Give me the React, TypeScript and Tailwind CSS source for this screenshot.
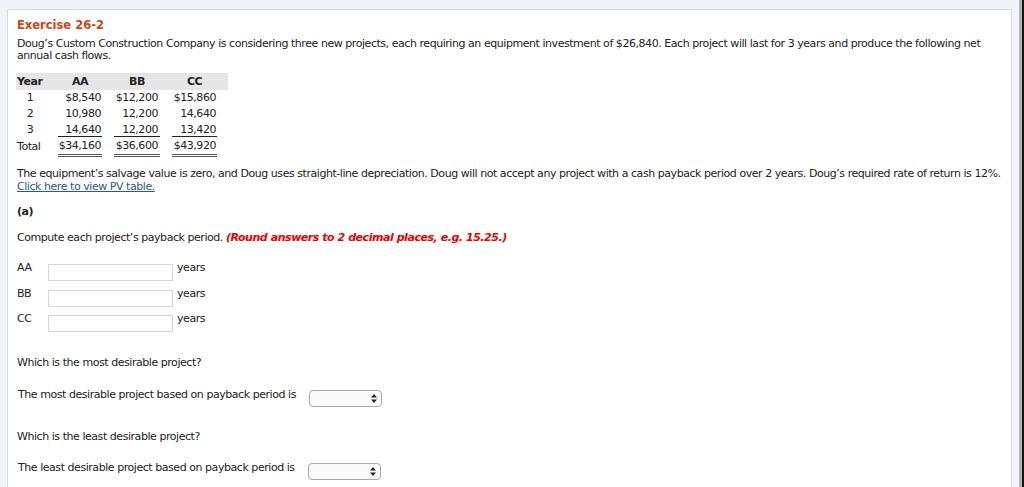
import React from "react";

const rows = [
  ["1", "$8,540", "$12,200", "$15,860"],
  ["2", "10,980", "12,200", "14,640"],
  ["3", "14,640", "12,200", "13,420"],
];

function AnswerInput({ label, h }: { label: string; h: string }) {
  return (
    <div className={"flex items-start " + h}>
      <span className="w-[31px]">{label}</span>
      <div className="w-[125px] h-[17px] mt-[2px] border border-[#d6d6d6] bg-white" />
      <span className="ml-[4px]">years</span>
    </div>
  );
}

function Dropdown() {
  return (
    <div className="w-[73px] h-[17px] mt-[1px] rounded-[4px] border border-[#a9a9a9] bg-[#fafafa] flex items-center justify-end pr-[4px]">
      <svg width="6" height="9" viewBox="0 0 6 9">
        <path d="M3 0 L6 3.5 L0 3.5 Z" fill="#222" />
        <path d="M3 9 L6 5.5 L0 5.5 Z" fill="#222" />
      </svg>
    </div>
  );
}

export default function App() {
  return (
    <div
      className="w-[1024px] h-[487px] overflow-hidden bg-[#f0f3f8] flex text-[11px] text-[#222] leading-[12px] tracking-[-0.45px]"
      style={{ fontFamily: '"DejaVu Sans", Verdana, sans-serif' }}
    >
      <div className="flex-1 pl-[7px] pt-[9px] pr-[7px]">
        <div className="h-[490px] bg-white border border-[#d5dae1] pl-[9px] pr-[6px] pt-[9px]">
          <div className="text-[#cc4512] font-bold tracking-[0px] text-[11.5px]">Exercise 26-2</div>
          <p className="mt-[7px]">
            Doug’s Custom Construction Company is considering three new projects, each requiring an equipment investment of $26,840. Each project will last for 3 years and produce the following net annual cash flows.
          </p>

          <table className="mt-[11px] ml-[-1px] border-collapse">
            <thead>
              <tr className="bg-[#e6e6e6] h-[17px] font-bold">
                <th className="w-[32px] text-left pl-[1px]">Year</th>
                <th className="w-[56px] pl-[10px] pr-[2px]">
                  <span className="block w-[44px] text-center">AA</span>
                </th>
                <th className="w-[56px] pl-[10px]">
                  <span className="block w-[46px] text-center">BB</span>
                </th>
                <th className="w-[68px] pl-[12px] pr-[11px]">
                  <span className="block w-[45px] text-center">CC</span>
                </th>
              </tr>
            </thead>
            <tbody>
              {rows.map((r, i) => (
                <tr key={r[0]} className="h-[16px]">
                  <td className="text-center pr-[4px]">{r[0]}</td>
                  <td className="pl-[10px] pr-[2px]">
                    <span className={"block w-[44px] text-right pr-[1px] " + (i === 2 ? "border-b border-[#222]" : "")}>{r[1]}</span>
                  </td>
                  <td className="pl-[10px]">
                    <span className={"block w-[46px] text-right pr-[2px] " + (i === 2 ? "border-b border-[#222]" : "")}>{r[2]}</span>
                  </td>
                  <td className="pl-[12px] pr-[11px]">
                    <span className={"block w-[45px] text-right pr-[1px] " + (i === 2 ? "border-b border-[#222]" : "")}>{r[3]}</span>
                  </td>
                </tr>
              ))}
              <tr className="h-[20px]">
                <td className="text-left pl-[1px] pb-[2px]">Total</td>
                <td className="pl-[10px] pr-[2px]">
                  <span className="block w-[44px] text-right pr-[1px] pt-[1px] pb-[2px] border-b-[3px] border-double border-[#555]">$34,160</span>
                </td>
                <td className="pl-[10px]">
                  <span className="block w-[46px] text-right pr-[2px] pt-[1px] pb-[2px] border-b-[3px] border-double border-[#555]">$36,600</span>
                </td>
                <td className="pl-[12px] pr-[11px]">
                  <span className="block w-[45px] text-right pr-[1px] pt-[1px] pb-[2px] border-b-[3px] border-double border-[#555]">$43,920</span>
                </td>
              </tr>
            </tbody>
          </table>

          <p className="mt-[10px]">
            The equipment’s salvage value is zero, and Doug uses straight-line depreciation. Doug will not accept any project with a cash payback period over 2 years. Doug’s required rate of return is 12%.
          </p>
          <a className="text-[#1f5c99] underline block w-fit mt-[1px]">Click here to view PV table.</a>

          <div className="font-bold mt-[13px]">(a)</div>
          <p className="mt-[14px]">
            Compute each project’s payback period.{" "}
            <span className="text-[#ee0000] font-bold italic">(Round answers to 2 decimal places, e.g. 15.25.)</span>
          </p>

          <div className="mt-[18px]">
            <AnswerInput label="AA" h="h-[26px]" />
            <AnswerInput label="BB" h="h-[25px]" />
            <AnswerInput label="CC" h="h-[25px]" />
          </div>

          <p className="mt-[19px]">Which is the most desirable project?</p>
          <div className="flex items-start mt-[20px] pl-[1px]">
            <span className="w-[291px] whitespace-nowrap">The most desirable project based on payback period is</span>
            <Dropdown />
          </div>

          <p className="mt-[24px]">Which is the least desirable project?</p>
          <div className="flex items-start mt-[19px] pl-[1px]">
            <span className="w-[290px] whitespace-nowrap">The least desirable project based on payback period is</span>
            <Dropdown />
          </div>
        </div>
      </div>
      <div className="w-[3px] bg-[#b3b3b3]" />
      <div className="w-[2px] bg-[#111]" />
    </div>
  );
}
